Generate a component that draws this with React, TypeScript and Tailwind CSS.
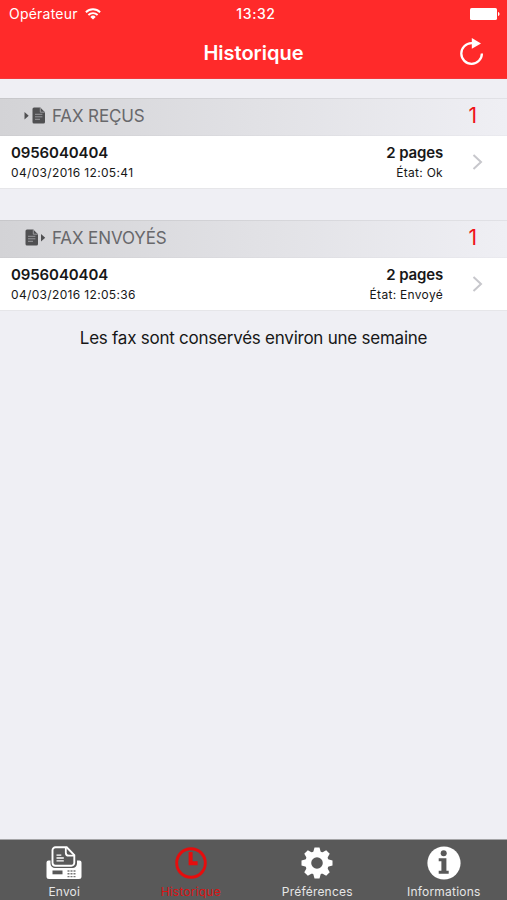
import type { ReactNode } from "react";

function WifiIcon() {
  return (
    <svg width="16" height="12" viewBox="0 0 16 12" fill="none" stroke="#fff" strokeWidth="1.9">
      <path d="M.9 4.200a10.200 10.200 0 0 1 14.200 0" />
      <path d="M3.400 7a6.600 6.600 0 0 1 9.200 0" />
      <path d="M8 11.500 5.300 8.900a3.800 3.800 0 0 1 5.400 0z" fill="#fff" stroke="none" />
    </svg>
  );
}

function BatteryIcon() {
  return (
    <svg width="30" height="12" viewBox="0 0 30 12" fill="#fff">
      <rect width="27" height="12" rx="1.6" />
      <path d="M28 4c2 .4 2 3.600 0 4z" />
    </svg>
  );
}

function RefreshIcon() {
  return (
    <svg className="-mt-0.5" width="24" height="28" viewBox="0 0 24 28" fill="none">
      <path d="M12.500 5.200H11.500A10.300 10.300 0 1 0 21.900 15.500" stroke="#fff" strokeWidth="2.300" />
      <path d="M11.800 0v10.700l9.200-5.300z" fill="#fff" />
    </svg>
  );
}

function PageIcon({ incoming }: { incoming: boolean }) {
  return (
    <svg width="22" height="18" viewBox="0 0 22 18" fill="#505052">
      <path d={incoming ? "M.5 5v7.500l4.200-3.700z" : "M17 5v7.500l4.200-3.700z"} />
      <g transform={incoming ? "translate(8.500 0)" : "translate(1.500 0)"}>
        <path d="M1.500.5h6.300l4.700 4.700v9.800a1.500 1.500 0 0 1-1.500 1.500H1.500A1.500 1.500 0 0 1 0 15V2A1.500 1.500 0 0 1 1.500.5z" />
        <path d="M7.800.8v4.400h4.500M2.500 7.300h7.400M2.500 9.800h7.400M2.500 12.300h5" fill="none" stroke="#a2a2a5" strokeWidth=".9" />
      </g>
    </svg>
  );
}

function FaxIcon() {
  return (
    <svg width="36" height="34" viewBox="0 0 36 34" fill="none">
      <path d="M2.500 14.500h31a2 2 0 0 1 2 2v14a2.500 2.500 0 0 1-2.500 2.500H3a2.500 2.500 0 0 1-2.500-2.500v-14a2 2 0 0 1 2-2z" fill="#fff" />
      <path d="M4.500 12v5.500a4.500 4.500 0 0 0 4.500 4.500h17.500a4.500 4.500 0 0 0 4.500-4.500v-8L20 0H9a4 4 0 0 0-4 4z" fill="#595959" />
      <path d="M9.500 1.300h11.200l7.600 7.900v7.500a3 3 0 0 1-3 3H9.500a3 3 0 0 1-3-3V4.300a3 3 0 0 1 3-3z" stroke="#fff" strokeWidth="1.900" />
      <path d="M19.800 1.500v5.200a3 3 0 0 0 3 3h5.500" stroke="#fff" strokeWidth="1.800" />
      <path d="M10.500 9.200h4.800M10.500 12h7.300M10.500 14.800h7.300" stroke="#fff" strokeWidth="1.300" />
      <rect x="6.500" y="24.500" width="10" height="3.800" fill="#595959" />
      <path d="M21.500 25h8M21.500 27.800h8M21.500 30.600h8" stroke="#777" strokeWidth="1.400" strokeDasharray="2 1" />
    </svg>
  );
}

function ClockIcon() {
  return (
    <svg width="32" height="32" viewBox="0 0 32 32" fill="none" stroke="#e60d0d">
      <circle cx="16" cy="16" r="14.300" strokeWidth="2.900" />
      <path d="M15.600 5v11.300h7" strokeWidth="4" />
    </svg>
  );
}

function GearIcon() {
  const teeth = [0, 45, 90, 135, 180, 225, 270, 315];
  return (
    <svg width="32" height="32" viewBox="0 0 32 32" fill="#fff">
      {teeth.map((angle) => (
        <path key={angle} d="M12 6 13.500.5h5L20 6z" transform={`rotate(${angle} 16 16)`} />
      ))}
      <circle cx="16" cy="16" r="8.800" fill="none" stroke="#fff" strokeWidth="6" />
    </svg>
  );
}

function InfoIcon() {
  return (
    <svg width="34" height="34" viewBox="0 0 34 34" fill="#595959">
      <circle cx="17" cy="17" r="16.600" fill="#fff" />
      <circle cx="16.700" cy="7.200" r="3" />
      <path d="M11.700 12.200h7.700v12.500h2.300v3h-10v-3h2.700v-9.500h-2.700z" />
    </svg>
  );
}

function SectionHeader({ title, count, incoming }: { title: string; count: number; incoming: boolean }) {
  return (
    <div className="flex h-[38px] items-center border-y border-t-black/5 border-b-black/2 bg-linear-to-r from-[#d3d3d6] via-[#e1e1e5] to-[#efeff4] pr-[30px] pb-0.5 pl-6 text-[#68686b]">
      <PageIcon incoming={incoming} />
      <h2 className="ml-1.5 text-[17px] leading-5 font-normal tracking-[-0.12px]">{title}</h2>
      <span className="ml-auto text-[21px] leading-6 text-[#f01318]">{count}</span>
    </div>
  );
}

function FaxRow({ number, date, pages, state }: { number: string; date: string; pages: string; state: string }) {
  return (
    <div className="flex h-[53px] border-b border-[#e6e6e9] bg-white pt-[7px] pr-6 pl-[11px] text-[#171717]">
      <div>
        <p className="text-[15px] leading-5 font-semibold tracking-[-0.1px]">{number}</p>
        <p className="text-[12px] leading-5 tracking-[0.34px]">{date}</p>
      </div>
      <div className="ml-auto text-right">
        <p className="text-[15px] leading-5 font-semibold tracking-[-0.15px]">{pages}</p>
        <p className="text-[12px] leading-5 tracking-[0.3px]">{state}</p>
      </div>
      <svg className="mt-[10px] ml-[29px]" width="11" height="18" viewBox="0 0 11 18" fill="none">
        <path d="m1.500 2 7.500 7-7.500 7" stroke="#c7c7cc" strokeWidth="2" />
      </svg>
    </div>
  );
}

function Tab({ icon, label, active = false }: { icon: ReactNode; label: string; active?: boolean }) {
  return (
    <div className={active ? "flex flex-1 flex-col items-center text-[#d91414]" : "flex flex-1 flex-col items-center text-[#e6e6e6]"}>
      <div className="flex h-[42px] items-center">{icon}</div>
      <span className="text-[12px] leading-4 tracking-[0.2px]">{label}</span>
    </div>
  );
}

export default function App() {
  return (
    <div className="flex h-[900px] w-[507px] flex-col overflow-hidden bg-[#efeff4] font-[Inter,'Liberation_Sans',sans-serif]">
      <header className="h-[79px] shrink-0 border-b border-[#f4383b] bg-[#ff2a2a] text-white">
        <div className="grid h-[27px] grid-cols-3 items-center pr-[7px] pl-[9px]">
          <div className="flex items-center gap-[7px] text-[14px] leading-5 tracking-[0.22px]">
            <span>Opérateur</span>
            <WifiIcon />
          </div>
          <span className="pl-[3px] text-center text-[14px] leading-5 font-medium tracking-[0.6px]">13:32</span>
          <div className="flex justify-end"><BatteryIcon /></div>
        </div>
        <div className="grid h-[51px] grid-cols-[1fr_auto_1fr] items-center pr-[23px] pl-[23px]">
          <h1 className="col-start-2 text-[20px] leading-7 font-semibold">Historique</h1>
          <div className="flex justify-end"><RefreshIcon /></div>
        </div>
      </header>
      <main className="flex-1 pt-[19px]">
        <SectionHeader title="FAX REÇUS" count={1} incoming />
        <FaxRow number="0956040404" date="04/03/2016 12:05:41" pages="2 pages" state="État: Ok" />
        <div className="h-[31px]" />
        <SectionHeader title="FAX ENVOYÉS" count={1} incoming={false} />
        <FaxRow number="0956040404" date="04/03/2016 12:05:36" pages="2 pages" state="État: Envoyé" />
        <p className="mt-[15px] text-center text-[17px] leading-6 tracking-[-0.24px] text-[#171717]">Les fax sont conservés environ une semaine</p>
      </main>
      <nav className="flex h-[61px] shrink-0 border-t border-[#a5a5a7] bg-[#595959] pt-[2px] pl-px">
        <Tab icon={<FaxIcon />} label="Envoi" />
        <Tab icon={<ClockIcon />} label="Historique" active />
        <Tab icon={<GearIcon />} label="Préférences" />
        <Tab icon={<InfoIcon />} label="Informations" />
      </nav>
    </div>
  );
}
